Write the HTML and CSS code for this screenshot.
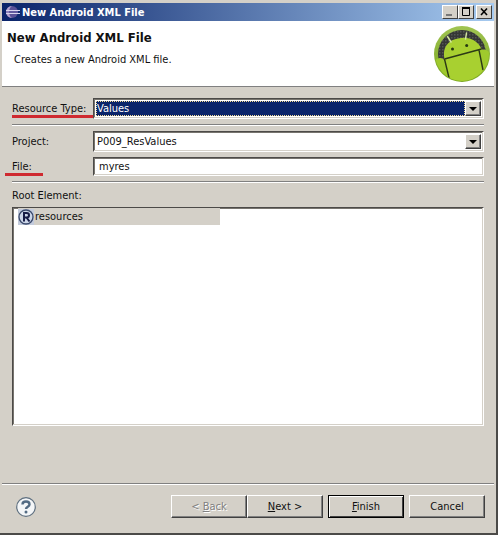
FILE: index.html
```html
<!DOCTYPE html>
<html lang="en">
<head>
  <meta charset="utf-8">
  <title>New Android XML File</title>
  <link rel="stylesheet" href="styles.css">
</head>

<body>
  <div class="window">
    <div class="titlebar">
      <svg class="app-icon" viewBox="0 0 16 16" aria-hidden="true">
        <circle cx="8" cy="8" r="6" fill="#5a5197"/>
        <path d="M8 2a6 6 0 0 0 0 12C4 12 4 4 8 2z" fill="#b5a4cf"/>
        <path d="M2 6.500h14M2 9.500h14" stroke="#d9d6ee" stroke-width="1"/>
        <path d="M2 8h12" stroke="#6a63a6" stroke-width="1"/>
      </svg>
      <span class="title">New Android XML File</span>
      <div class="window-buttons">
        <button type="button" aria-label="Minimize">
          <svg viewBox="0 0 12 10"><path d="M2 8h6" stroke="#777" stroke-width="2"/></svg>
        </button>
        <button type="button" aria-label="Maximize">
          <svg viewBox="0 0 12 10"><path d="M2.500 1v7.500h7V1M2 1h8" fill="none" stroke="#000"/><path d="M2 1h8" stroke="#000" stroke-width="2"/></svg>
        </button>
        <button type="button" class="close" aria-label="Close">
          <svg viewBox="0 0 12 10"><path d="M3 1.500l6 6.500M9 1.500L3 8" stroke="#000" stroke-width="1.600"/></svg>
        </button>
      </div>
    </div>

    <div class="header">
      <div class="header-text">
        <h1>New Android XML File</h1>
        <p>Creates a new Android XML file.</p>
      </div>
      <svg class="logo" viewBox="0 0 58 58" aria-hidden="true">
        <defs>
          <pattern id="mesh" width="3" height="3" patternUnits="userSpaceOnUse">
            <rect width="3" height="3" fill="#353735"/>
            <rect width="1.500" height="1.500" fill="#545654"/>
          </pattern>
          <linearGradient id="rim" x1="0" y1="0" x2="0" y2="1">
            <stop offset="0" stop-color="#a0c452"/>
            <stop offset="1" stop-color="#78a51d"/>
          </linearGradient>
          <clipPath id="disc"><circle cx="29" cy="29" r="27"/></clipPath>
        </defs>
        <circle cx="29" cy="29" r="28" fill="url(#rim)"/>
        <circle cx="29" cy="29" r="24" fill="url(#mesh)"/>
        <g clip-path="url(#disc)">
          <path d="M11.500 34C9 23 15 15 25 13.500C36 11 45 16 48.500 24L56 58H16z" fill="#a8d030"/>
          <path d="M0 38Q3 33 7 33Q11 33 13 38L19 58H0z" fill="#9fc92d"/>
          <path d="M46 26Q52 22 58 29V51L50 56z" fill="#9fc92d"/>
          <path d="M11.500 34L48.500 24M11.500 34L16.500 55M46 25L50 45" fill="none" stroke="#2c3a16" stroke-width="1.400"/>
        </g>
        <path d="M18 17L14.500 11.500M32.500 14L33.500 8" stroke="#d3e6a0" stroke-width="1.500" stroke-linecap="round"/>
        <circle cx="19.500" cy="24" r="1.500" fill="#263a10"/>
        <circle cx="33.700" cy="20.500" r="1.500" fill="#263a10"/>
      </svg>
    </div>

    <form class="content">
      <div class="row">
        <label class="marked" for="resourceType">Resource Type:</label>
        <div class="combo selected">
          <select id="resourceType"><option>Values</option></select>
          <span class="arrow"></span>
        </div>
      </div>
      <hr>
      <div class="row">
        <label for="project">Project:</label>
        <div class="combo">
          <select id="project"><option>P009_ResValues</option></select>
          <span class="arrow"></span>
        </div>
      </div>
      <div class="row">
        <label class="marked marked-file" for="file">File:</label>
        <input class="text-field" type="text" id="file" value="myres">
      </div>
      <hr>
      <div class="list-label" id="rootLabel">Root Element:</div>
      <ul class="list" aria-labelledby="rootLabel">
        <li class="list-item">
          <svg viewBox="0 0 16 16" aria-hidden="true">
            <rect width="16" height="16" fill="#c3cbdc"/>
            <circle cx="8" cy="8" r="7" fill="#cbd5e8" stroke="#39486b" stroke-width="1.300"/>
            <path d="M6 12.500V4H8.500Q11 4 11 6.200T8.500 8.500H6M8.500 8.500L11.500 12.500" fill="none" stroke="#161c46" stroke-width="2"/>
          </svg>
          <span>resources</span>
        </li>
      </ul>
    </form>

    <div class="footer">
      <button type="button" class="help" aria-label="Help">
        <svg viewBox="0 0 20 20">
          <circle cx="10" cy="10" r="9.300" fill="#f4f6f8" stroke="#5f7080" stroke-width="1.200"/>
          <path d="M6.500 7.500Q6.500 4.500 10 4.500T13.500 7.500C13.500 9.700 10 9.700 10 12" fill="none" stroke="#536b83" stroke-width="2.400"/>
          <circle cx="10" cy="15" r="1.500" fill="#536b83"/>
        </svg>
      </button>
      <div class="steps">
        <button type="button" class="btn" disabled>&lt; <u>B</u>ack</button>
        <button type="button" class="btn"><u>N</u>ext &gt;</button>
      </div>
      <button type="button" class="btn default"><u>F</u>inish</button>
      <button type="button" class="btn">Cancel</button>
    </div>
  </div>
</body>
</html>
```

FILE: styles.css
```css
* {
  box-sizing: border-box;
}

body {
  margin: 0;
  background-color: #d4d0c8;
  color: #111;
  font-family: Tahoma, "DejaVu Sans Condensed", sans-serif;
  font-size: 11px;
}

button,
input,
select {
  font: inherit;
  color: inherit;
}

.window {
  display: flex;
  flex-direction: column;
  min-height: 100vh;
  padding: 3px 2px 1px 2px;
  border-right: 2px solid #4b4a48;
  border-bottom: 2px solid #4b4a48;
}

/* Title bar */
.titlebar {
  display: flex;
  align-items: center;
  gap: 2px;
  height: 18px;
  padding: 0 2px;
  background: linear-gradient(to right, #0a246a, #a6caf0);
}

.app-icon {
  width: 16px;
  height: 16px;
}

.title {
  flex: 1;
  color: #fff;
  font-weight: bold;
}

.window-buttons {
  display: flex;
}

.window-buttons button {
  width: 16px;
  height: 14px;
  padding: 0;
  background-color: #d4d0c8;
  border: 1px solid;
  border-color: #fff #404040 #404040 #fff;
}

.window-buttons .close {
  margin-left: 2px;
}

.window-buttons svg {
  display: block;
  width: 12px;
  height: 10px;
  margin: auto;
}

/* Header */
.header {
  display: flex;
  justify-content: space-between;
  height: 66px;
  padding: 4px 3px 0 5px;
  background-color: #fff;
  border-bottom: 1px solid #808080;
}

.header h1 {
  margin: 5px 0 0;
  font-size: 13px;
  line-height: 16px;
}

.header p {
  margin: 7px 0 0 7px;
  line-height: 14px;
}

.logo {
  width: 58px;
  height: 58px;
}

/* Form */
.content {
  display: flex;
  flex-direction: column;
  flex: 1;
  padding: 11px 10px 57px;
}

.row {
  display: flex;
  align-items: center;
  margin-bottom: 5px;
}

.row label {
  position: relative;
  width: 81px;
  white-space: nowrap;
}

.marked::after {
  content: "";
  position: absolute;
  top: 13px;
  left: 0;
  width: 81px;
  height: 3px;
  background-color: #cf2a30;
}

.marked-file::after {
  left: -7px;
  width: 38px;
}

.combo,
.text-field,
.list {
  background-color: #fff;
  border: 1px solid;
  border-color: #4c4a48 #fff #fff #4c4a48;
  box-shadow: inset -1px -1px #d4d0c8, inset 1px 1px #77746e;
}

.combo {
  display: flex;
  flex: 1;
  height: 21px;
  padding: 2px;
}

.combo select {
  flex: 1;
  min-width: 0;
  padding: 0 1px;
  appearance: none;
  background: none;
  border: none;
  border-radius: 0;
  outline: none;
}

.selected select {
  background-color: #0a246a;
  border: 1px dotted #f5dc95;
  color: #fff;
  padding: 0;
}

.arrow {
  display: flex;
  align-items: center;
  justify-content: center;
  width: 16px;
  background-color: #d4d0c8;
  border: 1px solid;
  border-color: #fff #404040 #404040 #fff;
  box-shadow: inset -1px -1px #808080;
  pointer-events: none;
}

.arrow::after {
  content: "";
  border: 4px solid transparent;
  border-top-color: #000;
  border-bottom: none;
}

.text-field {
  flex: 1;
  min-width: 0;
  height: 19px;
  padding: 0 5px;
  border-radius: 0;
}

hr {
  width: 100%;
  height: 2px;
  margin: 0 0 5px;
  border: none;
  border-top: 1px solid #808080;
  border-bottom: 1px solid #fff;
}

.list-label {
  margin: 1px 0 4px;
  line-height: 14px;
}

.list {
  flex: 1;
  margin: 0;
  padding: 0 5px;
  list-style: none;
}

.list-item {
  display: flex;
  align-items: center;
  gap: 1px;
  width: 44%;
  height: 17px;
  background-color: #d4d0c8;
}

.list-item svg {
  width: 16px;
  height: 16px;
}

/* Footer */
.footer {
  display: flex;
  align-items: center;
  gap: 5px;
  height: 49px;
  padding: 0 9px 3px 14px;
  border-top: 1px solid #808080;
  box-shadow: inset 0 1px #fff;
}

.help {
  width: 20px;
  height: 20px;
  margin-right: auto;
  padding: 0;
  background: none;
  border: none;
}

.help svg {
  display: block;
}

.steps {
  display: flex;
}

.btn {
  width: 76px;
  height: 23px;
  padding: 0;
  background-color: #d4d0c8;
  border: 1px solid;
  border-color: #fff #404040 #404040 #fff;
  box-shadow: inset -1px -1px #808080;
}

.btn:disabled {
  color: #808080;
  text-shadow: 1px 1px #fff;
}

.default {
  border-color: #000;
  box-shadow: inset 1px 1px #fff, inset -1px -1px #404040;
}
```
